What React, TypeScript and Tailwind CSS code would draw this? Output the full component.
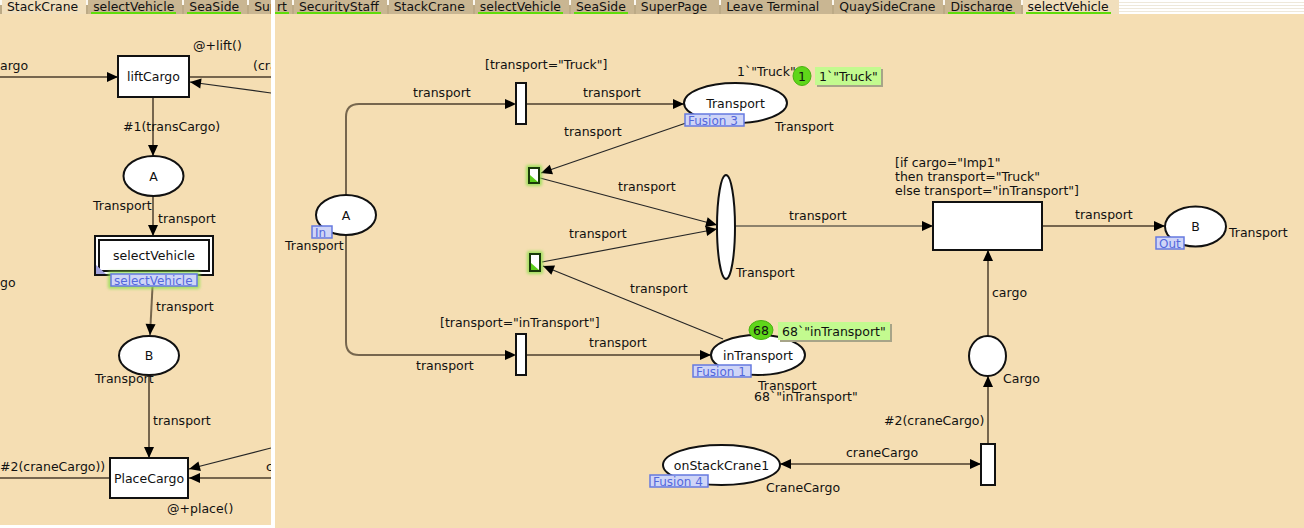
import React from 'react';

type Pt = [number, number];

const FONT = '"DejaVu Sans", Verdana, sans-serif';
const BROWN = '#76664e';
const DARK = '#262626';

// filled arrow head, tip at `tip`, pointing away from `from`
function Head({ tip, from }: { tip: Pt; from: Pt }) {
  const dx = tip[0] - from[0];
  const dy = tip[1] - from[1];
  const len = Math.hypot(dx, dy) || 1;
  const ux = dx / len;
  const uy = dy / len;
  const bx = tip[0] - ux * 11;
  const by = tip[1] - uy * 11;
  const pts = `${tip[0]},${tip[1]} ${bx - uy * 5},${by + ux * 5} ${bx + uy * 5},${by - ux * 5}`;
  return <polygon points={pts} fill="#000" />;
}

function Arc({
  from,
  to,
  head = true,
  tail = false,
  thin = false,
}: {
  from: Pt;
  to: Pt;
  head?: boolean;
  tail?: boolean;
  thin?: boolean;
}) {
  return (
    <g>
      <line
        x1={from[0]}
        y1={from[1]}
        x2={to[0]}
        y2={to[1]}
        stroke={thin ? DARK : BROWN}
        strokeWidth={thin ? 1.2 : 2}
      />
      {head && <Head tip={to} from={from} />}
      {tail && <Head tip={from} from={to} />}
    </g>
  );
}

function T({
  x,
  y,
  children,
  mid = false,
}: {
  x: number;
  y: number;
  children: React.ReactNode;
  mid?: boolean;
}) {
  return (
    <text x={x} y={y} fontSize={12.5} fill="#111" textAnchor={mid ? 'middle' : 'start'}>
      {children}
    </text>
  );
}

function Place({ cx, cy, rx, ry, label }: { cx: number; cy: number; rx: number; ry: number; label?: string }) {
  return (
    <g>
      <ellipse cx={cx} cy={cy} rx={rx} ry={ry} fill="#fff" stroke="#111" strokeWidth={2} />
      {label && (
        <T x={cx} y={cy + 4.5} mid>
          {label}
        </T>
      )}
    </g>
  );
}

function Trans({ x, y, w, h, label }: { x: number; y: number; w: number; h: number; label?: string }) {
  return (
    <g>
      <rect x={x} y={y} width={w} height={h} fill="#fff" stroke="#111" strokeWidth={2} />
      {label && (
        <T x={x + w / 2} y={y + h / 2 + 4.5} mid>
          {label}
        </T>
      )}
    </g>
  );
}

function Tag({ x, y, w, label, glow = false }: { x: number; y: number; w: number; label: string; glow?: boolean }) {
  return (
    <g>
      {glow && <rect x={x - 3} y={y - 3} width={w + 6} height={18} rx={2} fill="#8ee04a" opacity={0.75} filter="url(#blur)" />}
      <rect x={x} y={y} width={w} height={12} fill="#cfd5f7" stroke="#6679e0" strokeWidth={1.5} />
      <text x={x + 3} y={y + 10.5} fontSize={12} fill="#5468dc">
        {label}
      </text>
    </g>
  );
}

function Enabled({ x, y, h }: { x: number; y: number; h: number }) {
  return (
    <g>
      <rect x={x - 3} y={y - 3} width={16} height={h + 6} rx={2} fill="#8ee04a" opacity={0.8} filter="url(#blur)" />
      <rect x={x} y={y} width={10} height={h} fill="#fff" stroke="#1a3a0a" strokeWidth={2} />
      <polygon points={`${x + 1},${y + h - 8} ${x + 1},${y + h - 1} ${x + 9},${y + h - 1}`} fill="#5ccd1a" />
    </g>
  );
}

function Marking({ cx, cy, count, x, w, y, text }: { cx: number; cy: number; count: string; x: number; w: number; y: number; text: string }) {
  return (
    <g>
      <ellipse cx={cx} cy={cy} rx={count.length > 1 ? 12 : 9} ry={9.5} fill="#5fd61a" stroke="#49b010" strokeWidth={1} />
      <text x={cx} y={cy + 4.5} fontSize={12.5} fill="#111" textAnchor="middle">
        {count}
      </text>
      <rect x={x + 2} y={y + 2} width={w} height={18} fill="#a7a488" />
      <rect x={x} y={y} width={w} height={18} fill="#c3fa8f" />
      <T x={x + 4} y={y + 13.5}>
        {text}
      </T>
    </g>
  );
}

function Defs() {
  return (
    <defs>
      <filter id="blur" x="-50%" y="-50%" width="200%" height="200%">
        <feGaussianBlur stdDeviation="1.6" />
      </filter>
    </defs>
  );
}

function LeftCanvas() {
  return (
    <svg width={271} height={511} viewBox="0 14 271 511" fontFamily={FONT} className="block">
      <Defs />
      <Arc from={[0, 77]} to={[118, 77]} />
      <Arc from={[189, 77]} to={[271, 77]} head={false} />
      <Arc from={[271, 93]} to={[190, 82]} thin />
      <Arc from={[153, 97]} to={[153, 156]} />
      <Arc from={[153, 196]} to={[153, 236]} />
      <Arc from={[152.5, 287]} to={[150, 335]} />
      <Arc from={[149, 375]} to={[149, 458]} />
      <Arc from={[0, 478]} to={[110, 478]} head={false} />
      <Arc from={[271, 478]} to={[189, 478]} />
      <Arc from={[271, 448]} to={[189, 469]} thin />

      <Trans x={118} y={56} w={71} h={41} label="liftCargo" />
      <Place cx={153.5} cy={176} rx={30} ry={20} label="A" />
      <rect x={95} y={236} width={118} height={39} fill="#fff" stroke="#111" strokeWidth={2} />
      <rect x={99} y={240} width={110} height={31} fill="#fff" stroke="#111" strokeWidth={2} />
      <polygon points="96,265 96,274 106,274" fill="#a3a3dc" />
      <T x={154} y={259.5} mid>
        selectVehicle
      </T>
      <Tag x={111} y={274} w={86} label="selectVehicle" glow />
      <Place cx={149} cy={355.5} rx={30} ry={19.5} label="B" />
      <Trans x={110} y={458} w={78} h={40} label="PlaceCargo" />

      <T x={0} y={70}>argo</T>
      <T x={193} y={50}>@+lift()</T>
      <T x={253} y={70}>(cra</T>
      <T x={123} y={131}>#1(transCargo)</T>
      <T x={93} y={210}>Transport</T>
      <T x={158} y={223}>transport</T>
      <T x={0} y={287}>go</T>
      <T x={156} y={311}>transport</T>
      <T x={95} y={383}>Transport</T>
      <T x={153} y={425}>transport</T>
      <T x={0} y={471}>#2(craneCargo))</T>
      <T x={266} y={471}>c</T>
      <T x={167} y={513}>@+place()</T>
    </svg>
  );
}

function RightCanvas() {
  return (
    <svg width={1029} height={514} viewBox="275 14 1029 514" fontFamily={FONT} className="block">
      <Defs />
      {/* loops out of A */}
      <path d="M346,195 V117 Q346,104 359,104 H506" fill="none" stroke={BROWN} strokeWidth={2} />
      <Head tip={[516, 104]} from={[500, 104]} />
      <path d="M346,235 V342 Q346,355 359,355 H506" fill="none" stroke={BROWN} strokeWidth={2} />
      <Head tip={[516, 355]} from={[500, 355]} />

      <Arc from={[526, 104]} to={[684, 104]} />
      <Arc from={[686, 123]} to={[541, 173]} thin />
      <Arc from={[540, 178]} to={[717, 225]} thin />
      <Arc from={[542, 262]} to={[717, 229]} thin />
      <Arc from={[723, 339]} to={[543, 266]} thin />
      <Arc from={[735, 226]} to={[933, 226]} thin />
      <Arc from={[1042, 226]} to={[1165, 226]} />
      <Arc from={[988, 336]} to={[988, 250]} />
      <Arc from={[988, 444]} to={[988, 376]} />
      <Arc from={[981, 464]} to={[780, 464]} tail />
      <Arc from={[526, 355]} to={[711, 355]} />

      <Trans x={516} y={83} w={10} h={41} />
      <Trans x={516} y={334} w={10} h={41} />
      <Enabled x={529} y={168} h={15} />
      <Enabled x={530} y={254} h={17} />
      <Trans x={933} y={202} w={109} h={48} />
      <Trans x={981} y={444} w={14} h={41} />

      <Place cx={346} cy={215} rx={30} ry={20} label="A" />
      <Place cx={735.5} cy={103} rx={51.5} ry={20} label="Transport" />
      <ellipse cx={726} cy={227} rx={9} ry={52} fill="#fff" stroke="#111" strokeWidth={2} />
      <Place cx={1195.5} cy={226.5} rx={30.5} ry={20} label="B" />
      <Place cx={987.5} cy={356} rx={18.5} ry={20} />
      <Place cx={758} cy={355} rx={47} ry={20} label="inTransport" />
      <Place cx={721.5} cy={465} rx={58.5} ry={20} label="onStackCrane1" />

      <Tag x={312} y={226} w={20} label="In" />
      <Tag x={685} y={114} w={59} label="Fusion 3" />
      <Tag x={1156} y={237} w={28} label="Out" />
      <Tag x={693} y={365} w={58} label="Fusion 1" />
      <Tag x={650} y={475} w={58} label="Fusion 4" />

      <T x={737} y={76}>{'1`"Truck"'}</T>
      <Marking cx={802} cy={76} count="1" x={815} w={66} y={67} text={'1`"Truck"'} />
      <Marking cx={761} cy={330} count="68" x={778} w={112} y={322} text={'68`"inTransport"'} />

      <T x={485} y={69}>{'[transport="Truck"]'}</T>
      <T x={413} y={97}>transport</T>
      <T x={583} y={97}>transport</T>
      <T x={775} y={131}>Transport</T>
      <T x={564} y={136}>transport</T>
      <T x={618} y={191}>transport</T>
      <T x={569} y={238}>transport</T>
      <T x={285} y={250}>Transport</T>
      <T x={736} y={277}>Transport</T>
      <T x={789} y={220}>transport</T>
      <T x={895} y={167}>{'[if cargo="Imp1"'}</T>
      <T x={895} y={181}>{'then transport="Truck"'}</T>
      <T x={895} y={195}>{'else transport="inTransport"]'}</T>
      <T x={1075} y={219}>transport</T>
      <T x={1229} y={237}>Transport</T>
      <T x={630} y={293}>transport</T>
      <T x={992} y={297}>cargo</T>
      <T x={440} y={327}>{'[transport="inTransport"]'}</T>
      <T x={589} y={347}>transport</T>
      <T x={416} y={370}>transport</T>
      <T x={758} y={390}>Transport</T>
      <T x={754} y={401}>{'68`"inTransport"'}</T>
      <T x={1003} y={383}>Cargo</T>
      <T x={884} y={425}>#2(craneCargo)</T>
      <T x={846} y={457}>craneCargo</T>
      <T x={766} y={492}>CraneCargo</T>
    </svg>
  );
}

function Sep() {
  return (
    <div className="flex w-[2px] shrink-0 flex-col">
      <div className="h-[5px] bg-[#fbf8f0]" />
      <div className="flex-1 bg-[#bcaa86]" />
    </div>
  );
}

interface TabDef {
  label: string;
  active?: boolean;
  mark?: boolean;
  bare?: boolean;
  pad?: string;
}

function Tab({ label, active, mark, bare, pad = 'pr-[6px]' }: TabDef) {
  return (
    <div className={`flex h-[14px] shrink-0 ${active ? 'bg-[#f1dfbc]' : ''}`}>
      {!bare && <Sep />}
      <div className={`flex h-[14px] flex-col ${bare ? 'pl-0' : 'pl-[3px]'} ${pad}`}>
        <div className="h-[12px] whitespace-nowrap px-[2px] pt-[1px] leading-[12px]">{label}</div>
        <div className={`h-[2px] ${mark ? 'bg-[#5fdc0a]' : ''}`} />
      </div>
    </div>
  );
}

const leftTabs: TabDef[] = [
  { label: 'StackCrane', active: true },
  { label: 'selectVehicle', mark: true },
  { label: 'SeaSide', mark: true },
  { label: 'SuperPage' },
];

const rightTabs: TabDef[] = [
  { label: 'rt', mark: true, bare: true, pad: 'pr-[3px]' },
  { label: 'SecurityStaff', mark: true },
  { label: 'StackCrane' },
  { label: 'selectVehicle', mark: true },
  { label: 'SeaSide', mark: true },
  { label: 'SuperPage', pad: 'pr-[10px]' },
  { label: 'Leave Terminal', pad: 'pr-[11px]' },
  { label: 'QuaySideCrane' },
  { label: 'Discharge', mark: true },
  { label: 'selectVehicle', mark: true, active: true, pad: 'pr-[8px]' },
];

export default function App() {
  return (
    <div className="flex h-[528px] w-[1304px] overflow-hidden bg-white font-['DejaVu_Sans',Verdana,sans-serif] text-[12.4px] text-[#111]">
      {/* left page */}
      <div className="flex h-[525px] w-[271px] shrink-0 flex-col overflow-hidden">
        <div className="flex h-[14px] shrink-0 overflow-hidden bg-[#c9b692]">
          {leftTabs.map((t, i) => (
            <Tab key={i} {...t} />
          ))}
        </div>
        <div className="flex-1 bg-[#f5deb3]">
          <LeftCanvas />
        </div>
      </div>

      <div className="w-[4px] shrink-0 bg-white" />

      {/* right page */}
      <div className="flex min-w-0 flex-1 flex-col overflow-hidden">
        <div className="flex h-[14px] shrink-0 overflow-hidden bg-[#c9b692]">
          {rightTabs.map((t, i) => (
            <Tab key={i} {...t} />
          ))}
          <div className="flex-1 bg-[repeating-linear-gradient(180deg,#ffffff_0px,#ffffff_2px,#eee8da_2px,#eee8da_3px)]" />
        </div>
        <div className="flex-1 bg-[#f5deb3]">
          <RightCanvas />
        </div>
      </div>
    </div>
  );
}
